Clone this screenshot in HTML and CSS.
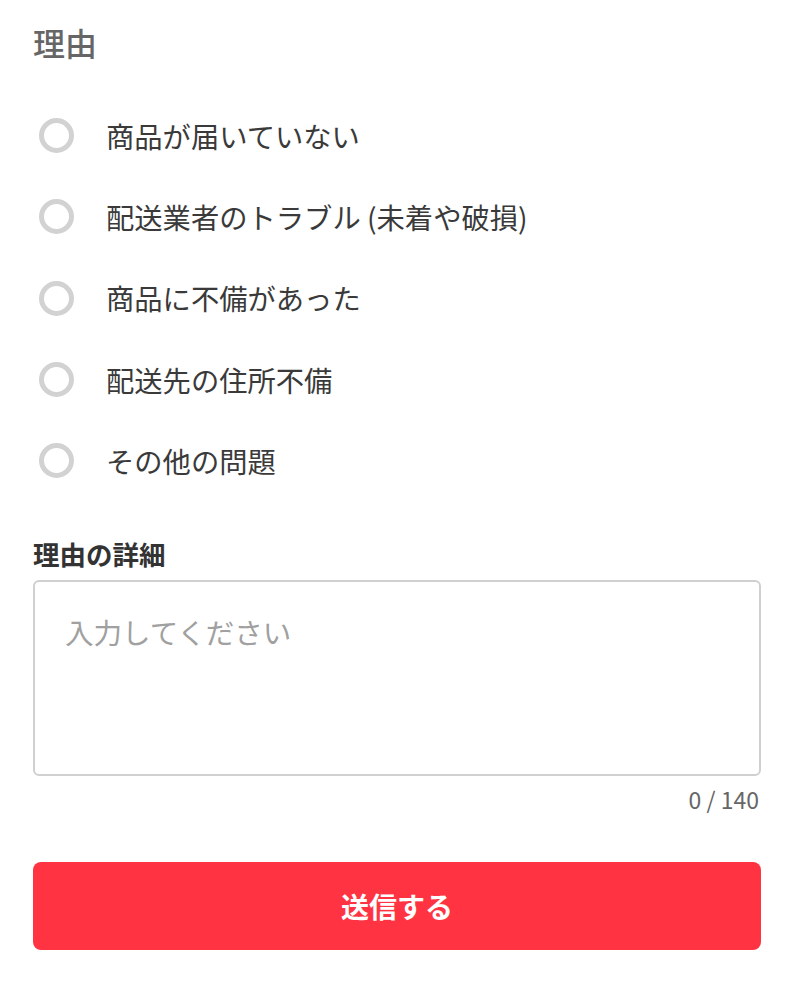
FILE: index.html
```html
<!DOCTYPE html>
<html lang="ja">
<head>
<meta charset="utf-8">
<link rel="stylesheet" href="styles.css">
</head>
<body>
<div class="page">
  <div class="title">理由</div>
  <ul class="options">
    <li class="option"><span class="radio"></span><span class="label">商品が届いていない</span></li>
    <li class="option"><span class="radio"></span><span class="label">配送業者のトラブル (未着や破損)</span></li>
    <li class="option"><span class="radio"></span><span class="label">商品に不備があった</span></li>
    <li class="option"><span class="radio"></span><span class="label">配送先の住所不備</span></li>
    <li class="option"><span class="radio"></span><span class="label">その他の問題</span></li>
  </ul>
  <div class="detail-label">理由の詳細</div>
  <textarea class="detail" placeholder="入力してください"></textarea>
  <div class="counter">0 / 140</div>
  <button class="submit">送信する</button>
</div>
</body>
</html>
```
FILE: styles.css
```css
* { box-sizing: border-box; }
html, body { margin: 0; padding: 0; background: #fff; }
body {
  font-family: "Noto Sans CJK JP", "Noto Sans", sans-serif;
  color: #3a3a3a;
}
.page {
  padding: 0 32px 0 33px;
  display: flex;
  flex-direction: column;
}
.title {
  margin-top: 22px;
  font-size: 32px;
  line-height: 40px;
  font-weight: 500;
  color: #666;
}
.options {
  list-style: none;
  margin: 33px 0 0;
  padding: 0;
}
.option {
  height: 81.3px;
  display: flex;
  align-items: center;
}
.radio {
  width: 35px;
  height: 35px;
  margin-left: 6px;
  border: 5px solid #d2d2d2;
  border-radius: 50%;
  flex: none;
}
.label {
  margin-left: 32px;
  font-size: 28.3px;
  line-height: 40px;
  color: #3a3a3a;
}
.detail-label {
  margin-top: 35px;
  font-size: 26.5px;
  line-height: 36px;
  font-weight: 700;
  color: #333;
}
.detail {
  margin-top: 8px;
  width: 100%;
  height: 196px;
  border: 2px solid #d0d0d0;
  border-radius: 6px;
  padding: 30px 30px;
  font-family: "Noto Sans CJK JP", "Noto Sans", sans-serif;
  font-size: 28.5px;
  line-height: 40px;
  color: #333;
  resize: none;
  outline: none;
  display: block;
}
.detail::placeholder { color: #a0a0a0; }
.counter {
  margin-top: 8px;
  text-align: right;
  padding-right: 2px;
  font-size: 23px;
  line-height: 30px;
  color: #666;
}
.submit {
  margin-top: 48px;
  width: 100%;
  height: 88px;
  border: none;
  border-radius: 8px;
  background: #ff3341;
  color: #fff;
  font-family: "Noto Sans CJK JP", "Noto Sans", sans-serif;
  font-size: 28px;
  font-weight: 700;
}
```
